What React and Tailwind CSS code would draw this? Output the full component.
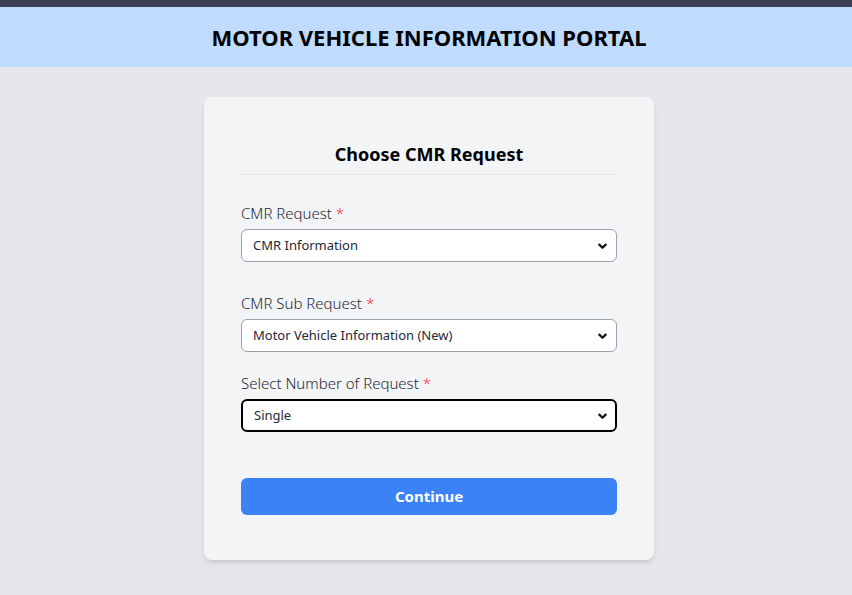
import React from 'react';

const font = { fontFamily: '"Noto Sans", "Open Sans", sans-serif' };

function Chevron() {
  return (
    <svg
      className="pointer-events-none absolute right-[9px] top-1/2 -translate-y-1/2 w-[11px] h-[11px]"
      viewBox="0 0 12 12"
      fill="none"
      stroke="#111"
      strokeWidth="2.4"
      strokeLinecap="round"
      strokeLinejoin="round"
    >
      <path d="M2.5 4.5 6 8 9.5 4.5" />
    </svg>
  );
}

function Field({ label, value, options, focused, className }) {
  return (
    <div className={className}>
      <label className="block text-[15px] font-light leading-[22px] text-gray-800">
        {label} <span className="text-red-500">*</span>
      </label>
      <div className="relative mt-[5px]">
        <select
          defaultValue={value}
          className={
            'block w-full h-[33px] appearance-none rounded-md bg-white pl-[11px] pr-8 text-[13px] font-normal text-gray-800 outline-none ' +
            (focused ? 'border-2 border-black' : 'border border-gray-400')
          }
        >
          {options.map((o) => (
            <option key={o}>{o}</option>
          ))}
        </select>
        <Chevron />
      </div>
    </div>
  );
}

export default function App() {
  return (
    <div className="min-h-screen bg-gray-200" style={font}>
      <div className="h-[7px] bg-[#3a4155]"></div>
      <header className="h-[60px] bg-[#bfdbfe] flex items-center justify-center pl-[6px]">
        <h1 className="text-[22px] font-bold text-black">MOTOR VEHICLE INFORMATION PORTAL</h1>
      </header>

      <main className="flex justify-center pt-[30px] pb-8 pl-[6px]">
        <div className="w-[450px] rounded-lg bg-gray-100 px-[37px] pt-[43px] pb-[45px] shadow-md">
          <h2 className="text-center text-[18px] font-bold leading-[28px] text-black pb-[6px] border-b border-gray-200">
            Choose CMR Request
          </h2>

          <Field
            className="mt-[27px]"
            label="CMR Request"
            value="CMR Information"
            options={['CMR Information', 'CMR Certificate']}
          />
          <Field
            className="mt-[30px]"
            label="CMR Sub Request"
            value="Motor Vehicle Information (New)"
            options={['Motor Vehicle Information (New)', 'Motor Vehicle Information (Old)']}
          />
          <Field
            className="mt-[20px]"
            label="Select Number of Request"
            value="Single"
            options={['Single', 'Multiple']}
            focused
          />

          <button className="mt-[46px] w-full h-[37px] rounded-md bg-[#3b82f6] text-[15px] font-bold text-white">
            Continue
          </button>
        </div>
      </main>
    </div>
  );
}
